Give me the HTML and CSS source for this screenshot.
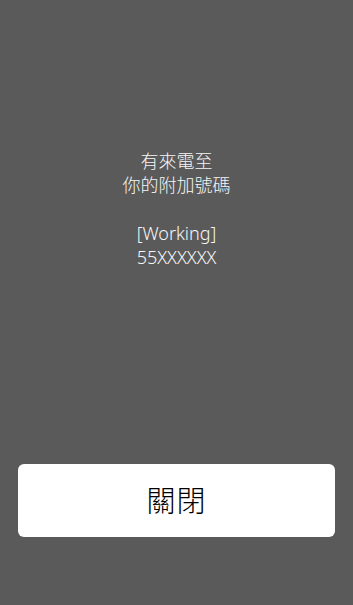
FILE: index.html
```html
<!DOCTYPE html>
<html lang="zh-Hant">
<head>
<meta charset="utf-8">
<title>來電</title>
<link rel="stylesheet" href="styles.css">
</head>
<body>
<main class="screen">
  <section class="message">
    <p class="line">有來電至</p>
    <p class="line">你的附加號碼</p>
    <p class="line blank">&nbsp;</p>
    <p class="line">[Working]</p>
    <p class="line">55XXXXXX</p>
  </section>
  <div class="spacer"></div>
  <button class="close-button" type="button">關閉</button>
</main>
</body>
</html>
```

FILE: styles.css
```css
html, body {
  margin: 0;
  padding: 0;
  background: #5a5a5a;
}

.screen {
  display: flex;
  flex-direction: column;
  height: 605px;
  width: 353px;
  box-sizing: border-box;
  font-family: "Noto Sans", "Noto Sans CJK TC", sans-serif;
}

.message {
  margin-top: 149px;
  text-align: center;
  color: #f6f6f6;
  font-size: 18px;
  font-weight: 300;
  line-height: 24px;
}

.line {
  margin: 0;
}

.spacer {
  flex: 1;
}

.close-button {
  margin: 0 18px 68px 18px;
  height: 73px;
  border: none;
  border-radius: 6px;
  background: #ffffff;
  color: #000000;
  font-family: "Noto Sans CJK TC", sans-serif;
  font-size: 29px;
  font-weight: 300;
  letter-spacing: 1px;
  padding: 0 0 3px 0;
  display: flex;
  align-items: center;
  justify-content: center;
}
```
